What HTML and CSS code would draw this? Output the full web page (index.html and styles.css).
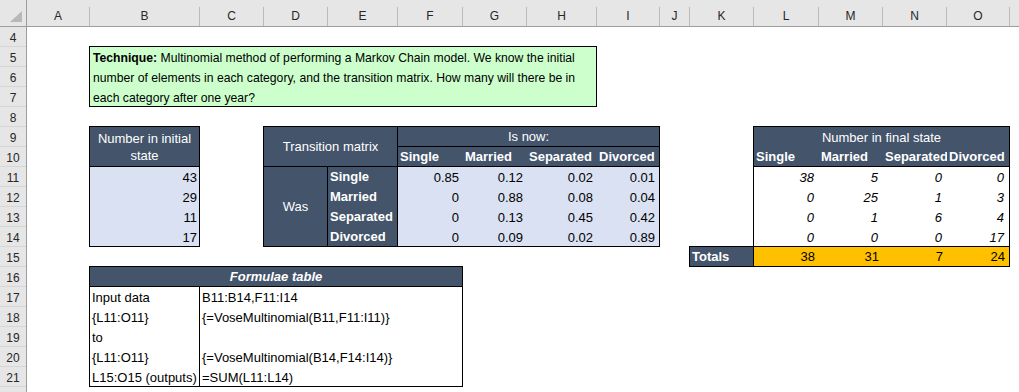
FILE: index.html
```html
<!DOCTYPE html>
<html lang="en">
<head>
    <meta charset="UTF-8">
    <meta name="viewport" content="width=device-width, initial-scale=1.0">
    <title>Markov Chain - Multinomial method</title>
    <link rel="stylesheet" href="styles.css">
</head>
<body>
    <div class="sheet">
        <div class="corner"><span class="corner-mark"></span></div>

        <!-- Column letters -->
        <div class="col-heads">
            <div class="col-head">A</div>
            <div class="col-head">B</div>
            <div class="col-head">C</div>
            <div class="col-head">D</div>
            <div class="col-head">E</div>
            <div class="col-head">F</div>
            <div class="col-head">G</div>
            <div class="col-head">H</div>
            <div class="col-head">I</div>
            <div class="col-head">J</div>
            <div class="col-head">K</div>
            <div class="col-head">L</div>
            <div class="col-head">M</div>
            <div class="col-head">N</div>
            <div class="col-head">O</div>
            <div class="col-head"></div>
        </div>

        <!-- Row numbers -->
        <div class="row-heads">
            <div class="row-head">4</div>
            <div class="row-head">5</div>
            <div class="row-head">6</div>
            <div class="row-head">7</div>
            <div class="row-head">8</div>
            <div class="row-head">9</div>
            <div class="row-head">10</div>
            <div class="row-head">11</div>
            <div class="row-head">12</div>
            <div class="row-head">13</div>
            <div class="row-head">14</div>
            <div class="row-head">15</div>
            <div class="row-head">16</div>
            <div class="row-head">17</div>
            <div class="row-head">18</div>
            <div class="row-head">19</div>
            <div class="row-head">20</div>
            <div class="row-head">21</div>
            <div class="row-head"></div>
        </div>

        <div class="cells">
            <div class="note">
                <b>Technique:</b> Multinomial method of performing a Markov Chain model. We know the initial<br>
                number of elements in each category, and the transition matrix. How many will there be in<br>
                each category after one year?
            </div>

            <!-- Initial state -->
            <div class="box initial">
                <div class="head">Number in initial state</div>
                <div class="cell num">43</div>
                <div class="cell num">29</div>
                <div class="cell num">11</div>
                <div class="cell num">17</div>
            </div>

            <!-- Transition matrix -->
            <div class="box trans">
                <div class="head tm">Transition matrix</div>
                <div class="head isnow">Is now:</div>
                <div class="cell hd">Single</div>
                <div class="cell hd">Married</div>
                <div class="cell hd">Separated</div>
                <div class="cell hd">Divorced</div>
                <div class="head was">Was</div>

                <div class="cell label">Single</div>
                <div class="cell num ice">0.85</div>
                <div class="cell num ice">0.12</div>
                <div class="cell num ice">0.02</div>
                <div class="cell num ice">0.01</div>

                <div class="cell label">Married</div>
                <div class="cell num ice">0</div>
                <div class="cell num ice">0.88</div>
                <div class="cell num ice">0.08</div>
                <div class="cell num ice">0.04</div>

                <div class="cell label">Separated</div>
                <div class="cell num ice">0</div>
                <div class="cell num ice">0.13</div>
                <div class="cell num ice">0.45</div>
                <div class="cell num ice">0.42</div>

                <div class="cell label">Divorced</div>
                <div class="cell num ice">0</div>
                <div class="cell num ice">0.09</div>
                <div class="cell num ice">0.02</div>
                <div class="cell num ice">0.89</div>
            </div>

            <!-- Final state -->
            <div class="box final">
                <div class="head title">Number in final state</div>
                <div class="cell hd">Single</div>
                <div class="cell hd">Married</div>
                <div class="cell hd">Separated</div>
                <div class="cell hd">Divorced</div>

                <div class="cell num out">38</div>
                <div class="cell num out">5</div>
                <div class="cell num out">0</div>
                <div class="cell num out">0</div>

                <div class="cell num out">0</div>
                <div class="cell num out">25</div>
                <div class="cell num out">1</div>
                <div class="cell num out">3</div>

                <div class="cell num out">0</div>
                <div class="cell num out">1</div>
                <div class="cell num out">6</div>
                <div class="cell num out">4</div>

                <div class="cell num out">0</div>
                <div class="cell num out">0</div>
                <div class="cell num out">0</div>
                <div class="cell num out">17</div>
            </div>

            <div class="box totals">
                <div class="cell tot-label">Totals</div>
                <div class="cell num">38</div>
                <div class="cell num">31</div>
                <div class="cell num">7</div>
                <div class="cell num">24</div>
            </div>

            <!-- Formulae -->
            <div class="box formulae">
                <div class="head fhead">Formulae table</div>
                <div class="cell fl">Input data</div>
                <div class="cell">B11:B14,F11:I14</div>
                <div class="cell fl">{L11:O11}</div>
                <div class="cell">{=VoseMultinomial(B11,F11:I11)}</div>
                <div class="cell fl">to</div>
                <div class="cell"></div>
                <div class="cell fl">{L11:O11}</div>
                <div class="cell">{=VoseMultinomial(B14,F14:I14)}</div>
                <div class="cell fl">L15:O15 (outputs)</div>
                <div class="cell">=SUM(L11:L14)</div>
            </div>
        </div>
    </div>
</body>
</html>
```

FILE: styles.css
```css
:root {
    --cols: 62px 110px 64px 64px 70px 65px 64px 70px 63px 30px 64px 65px 64px 64px 63px 10px;
    --rows: 19px repeat(17, 20px) 6px;
    --slate: #44546a;
    --ice: #d9e1f2;
    --line: #000;
}

* {
    box-sizing: border-box;
}

body {
    margin: 0;
    font-family: 'Liberation Sans', Arial, sans-serif;
    font-size: 13px;
    color: #000;
    background-color: #fff;
    overflow: hidden;
}

.sheet {
    display: grid;
    grid-template-columns: 27px 992px;
    grid-template-rows: 27px 365px;
    width: 1019px;
    height: 392px;
    overflow: hidden;
}

/* Headers */
.corner {
    background-color: #e6e6e6;
    border-right: 1px solid #9d9d9d;
    border-bottom: 1px solid #9d9d9d;
    display: flex;
    justify-content: flex-end;
    align-items: flex-end;
    padding: 0 4px 4px 0;
}

.corner-mark {
    width: 0;
    height: 0;
    border-left: 12px solid transparent;
    border-bottom: 11px solid #b8b8b8;
}

.col-heads {
    display: grid;
    grid-template-columns: var(--cols);
    background-color: #e6e6e6;
    border-bottom: 1px solid #9d9d9d;
}

.col-head {
    margin-top: 7px;
    text-align: center;
    font-size: 12px;
    line-height: 19px;
    color: #262626;
}

.col-head + .col-head {
    border-left: 1px solid #bababa;
}

.row-heads {
    display: grid;
    grid-template-rows: var(--rows);
    background-color: #e6e6e6;
    border-right: 1px solid #9d9d9d;
    overflow: hidden;
}

.row-head {
    text-align: center;
    font-size: 12px;
    line-height: 19px;
    padding-top: 2px;
    color: #262626;
}

.row-head + .row-head {
    border-top: 1px solid #d6d6d6;
}

/* Sheet body */
.cells {
    display: grid;
    grid-template-columns: var(--cols);
    grid-template-rows: var(--rows);
}

.note {
    grid-column: 2 / 9;
    grid-row: 2 / 5;
    margin: 0 -1px -1px 0;
    border: 1px solid var(--line);
    background-color: #ccffcc;
    padding: 1px 3px 0;
    font-size: 12.2px;
    line-height: 20px;
    white-space: nowrap;
}

.box {
    display: grid;
    border: 1px solid var(--line);
    margin: 0 -1px -1px 0;
}

.cell {
    line-height: 20px;
    padding: 1px 2px 0;
    white-space: nowrap;
    overflow: hidden;
}

.num {
    text-align: right;
    padding-right: 4px;
}

.ice {
    background-color: var(--ice);
}

.head {
    display: flex;
    align-items: center;
    justify-content: center;
    text-align: center;
    line-height: 17px;
    padding: 0 4px;
    background-color: var(--slate);
    color: #fff;
}

.hd,
.label {
    padding-top: 0;
    font-weight: bold;
    color: #fff;
    background-color: var(--slate);
}

/* Initial state */
.initial {
    grid-column: 2 / 3;
    grid-row: 6 / 12;
    grid-template-rows: 40px 20px 20px 20px 19px;
    background-color: var(--ice);
}

.initial .head {
    border-bottom: 1px solid var(--line);
}

.initial .num {
    padding-right: 2px;
}

/* Transition matrix */
.trans {
    grid-column: 4 / 10;
    grid-row: 6 / 12;
    grid-template-columns: 64px 70px 65px 64px 70px 62px;
    grid-template-rows: 20px 20px 20px 20px 20px 19px;
    background-color: var(--slate);
}

.trans .tm {
    grid-column: 1 / 3;
    grid-row: 1 / 3;
    border-right: 1px solid var(--line);
    border-bottom: 1px solid var(--line);
}

.trans .isnow {
    grid-column: 3 / 7;
    grid-row: 1;
    border-bottom: 1px solid var(--line);
}

.trans .hd {
    border-bottom: 1px solid var(--line);
}

.trans .was {
    grid-column: 1;
    grid-row: 3 / 7;
    border-right: 1px solid var(--line);
}

.trans .label {
    border-right: 1px solid var(--line);
}

/* Final state */
.final {
    grid-column: 12 / 16;
    grid-row: 6 / 12;
    grid-template-columns: 65px 64px 64px 62px;
    grid-template-rows: 20px 20px 20px 20px 20px 19px;
}

.final .title {
    grid-column: 1 / 5;
}

.final .hd {
    border-bottom: 1px solid var(--line);
}

.out {
    font-style: italic;
    padding-right: 5px;
}

.totals {
    grid-column: 11 / 16;
    grid-row: 12 / 13;
    grid-template-columns: 64px 65px 64px 64px 62px;
    background-color: #ffc000;
}

.totals .cell {
    line-height: 19px;
    padding-top: 0;
}

.tot-label {
    font-weight: bold;
    color: #fff;
    background-color: var(--slate);
    border-right: 1px solid var(--line);
}

/* Formulae table */
.formulae {
    grid-column: 2 / 7;
    grid-row: 13 / 19;
    grid-template-columns: 110px 1fr;
    grid-template-rows: 20px 20px 20px 20px 20px 19px;
}

.fhead {
    grid-column: 1 / 3;
    font-weight: bold;
    font-style: italic;
    border-bottom: 1px solid var(--line);
}

.fl {
    border-right: 1px solid var(--line);
}
```
